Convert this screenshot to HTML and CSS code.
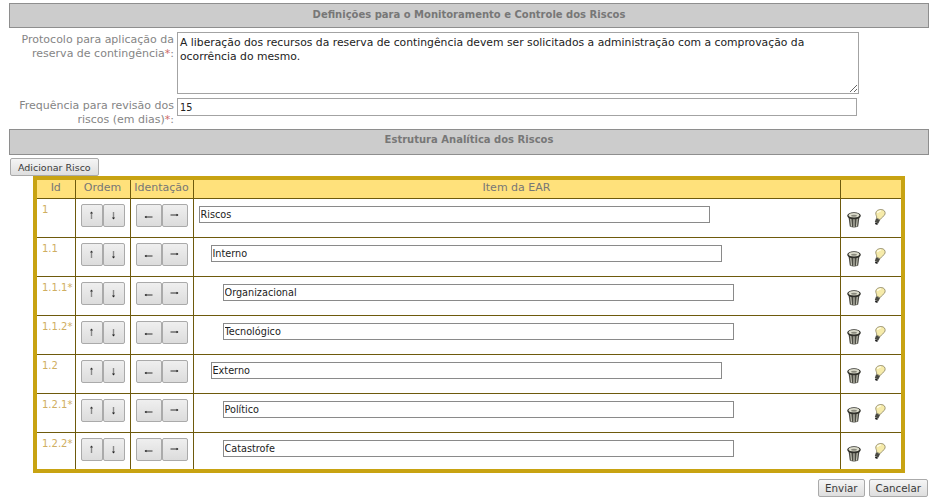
FILE: index.html
```html
<!DOCTYPE html>
<html lang="pt-BR">
<head>
  <meta charset="UTF-8">
  <title>Monitoramento e Controle dos Riscos</title>
  <link rel="stylesheet" href="styles.css">
</head>
<body>

  <svg class="sprites" width="0" height="0">
    <symbol id="lixo" viewBox="0 0 14 16">
      <path d="M1.500 5 L2.800 14.500 Q7 16.500 11.200 14.500 L12.500 5 Z" fill="#4a4a42"/>
      <path d="M3.700 6.500 L4.500 14.500 M7 7 V15 M10.300 6.500 L9.500 14.500" stroke="#c4c4b6" stroke-width="1.200" fill="none"/>
      <ellipse cx="7" cy="3.800" rx="6.800" ry="3.500" fill="#2f2f29"/>
      <ellipse cx="7" cy="3.200" rx="5.300" ry="2.200" fill="#dcdccc"/>
      <ellipse cx="7" cy="3.800" rx="3" ry="1" fill="#8b8b7e"/>
    </symbol>
    <symbol id="lampada" viewBox="0 0 12 15">
      <path d="M7.500 .5 C10.300 .5 11.700 2.600 11.200 4.700 C10.700 6.800 8 7.500 6.600 10 L3.300 8.600 C3.800 6.800 2.300 5.800 2.500 3.800 C2.700 1.800 4.700 .5 7.500 .5 Z" fill="#f6ebaa" stroke="#8f8a68" stroke-width=".8"/>
      <path d="M4 3.800 C4.500 2.500 6 1.700 7.500 1.800" stroke="#fffde8" stroke-width="1.300" fill="none"/>
      <path d="M2.800 8.700 L6.500 10.300 L4.900 13.600 L1.600 12.100 Z" fill="#4a4a43"/>
      <path d="M2 13.300 L4.200 14.300" stroke="#1c1c1c" stroke-width="1.500"/>
    </symbol>
    <symbol id="cima" viewBox="0 0 9 11">
      <path d="M4.500 2 V9" stroke="#8a8a8a" stroke-width="1.400"/>
      <path d="M3 3.500 L4.500 1.500 L6 3.500 Z" fill="#333"/>
    </symbol>
    <symbol id="baixo" viewBox="0 0 9 11">
      <path d="M4.500 2 V9" stroke="#8a8a8a" stroke-width="1.400"/>
      <path d="M3 7.500 L4.500 9.500 L6 7.500 Z" fill="#222"/>
    </symbol>
    <symbol id="esquerda" viewBox="0 0 11 9">
      <path d="M2 6 H9.500" stroke="#333" stroke-width="1"/>
      <path d="M3.500 4.700 L1.500 6 L3.500 7.300 Z" fill="#222"/>
    </symbol>
    <symbol id="direita" viewBox="0 0 11 9">
      <path d="M1.500 4 H9" stroke="#333" stroke-width="1"/>
      <path d="M7.500 2.700 L9.500 4 L7.500 5.300 Z" fill="#222"/>
    </symbol>
  </svg>

  <h2 class="barra">Definições para o Monitoramento e Controle dos Riscos</h2>

  <div class="campo">
    <label class="rotulo">Protocolo para aplicação da reserva de contingência<span class="obrigatorio">*</span>:</label>
    <textarea class="texto-longo">A liberação dos recursos da reserva de contingência devem ser solicitados a administração com a comprovação da ocorrência do mesmo.</textarea>
  </div>

  <div class="campo">
    <label class="rotulo">Frequência para revisão dos riscos (em dias)<span class="obrigatorio">*</span>:</label>
    <input class="texto-curto" type="text" value="15">
  </div>

  <h2 class="barra barra-ear">Estrutura Analítica dos Riscos</h2>

  <button class="botao adicionar">Adicionar Risco</button>

  <table class="ear">
    <thead>
      <tr>
        <th class="col-id">Id</th>
        <th class="col-ordem">Ordem</th>
        <th class="col-ident">Identação</th>
        <th class="col-item">Item da EAR</th>
        <th></th>
      </tr>
    </thead>
    <tbody id="linhas"></tbody>
  </table>

  <div class="rodape">
    <button class="botao">Enviar</button>
    <button class="botao">Cancelar</button>
  </div>

  <script>
    const itens = [
      ["1", 0, "Riscos"],
      ["1.1", 1, "Interno"],
      ["1.1.1*", 2, "Organizacional"],
      ["1.1.2*", 2, "Tecnológico"],
      ["1.2", 1, "Externo"],
      ["1.2.1*", 2, "Político"],
      ["1.2.2*", 2, "Catastrofe"]
    ];

    const linhas = document.getElementById("linhas");
    for (const [id, nivel, nome] of itens) {
      const tr = document.createElement("tr");
      tr.innerHTML = `
        <td class="id">${id}</td>
        <td><div class="par">
          <button class="seta"><svg class="vertical"><use href="#cima"/></svg></button>
          <button class="seta"><svg class="vertical"><use href="#baixo"/></svg></button>
        </div></td>
        <td><div class="par">
          <button class="seta larga"><svg class="horizontal"><use href="#esquerda"/></svg></button>
          <button class="seta larga"><svg class="horizontal"><use href="#direita"/></svg></button>
        </div></td>
        <td><input class="item nivel-${nivel}" type="text" value="${nome}"></td>
        <td><div class="acoes">
          <svg class="lixo"><use href="#lixo"/></svg>
          <svg class="lampada"><use href="#lampada"/></svg>
        </div></td>`;
      linhas.appendChild(tr);
    }
  </script>

</body>
</html>
```

FILE: styles.css
```css
body {
  margin: 3px 6px 0 9px;
  font-family: "DejaVu Sans", Verdana, sans-serif;
  font-size: 11px;
  color: #222;
  background: #fff;
}
.sprites {
  position: absolute;
}
.barra {
  margin: 0;
  height: 23px;
  line-height: 21px;
  border: 1px solid #8e8e8e;
  background: #cccccc;
  color: #777;
  font-size: 10px;
  font-weight: bold;
  text-align: center;
}
.barra-ear {
  margin-top: 2px;
  height: 24px;
  line-height: 20px;
}
.campo {
  display: flex;
  align-items: flex-start;
  margin-top: 4px;
}
.rotulo {
  width: 165px;
  padding: 1px 3px 0 0;
  text-align: right;
  color: #858585;
  font-size: 11px;
  line-height: 14px;
}
.obrigatorio {
  color: #cc6a66;
}
.texto-longo, .texto-curto, .item {
  box-sizing: border-box;
  font-family: "DejaVu Sans", Verdana, sans-serif;
  color: #222;
  border: 1px solid #a3a3a3;
  margin: 0;
}
.texto-longo {
  width: 682px;
  height: 62px;
  padding: 3px 2px 0;
  font-size: 10.800px;
  line-height: 14px;
}
.texto-curto {
  width: 680px;
  height: 18px;
  padding: 1px 2px;
  font-size: 9.700px;
}
.botao {
  box-sizing: border-box;
  font-family: "DejaVu Sans", Verdana, sans-serif;
  font-size: 10.300px;
  height: 18px;
  padding: 0 6px;
  color: #3a3a3a;
  border: 1px solid #aaa;
  border-radius: 2px;
  background: linear-gradient(#f5f5f5, #dedede);
}
.adicionar {
  display: block;
  margin: 3px 0 0 1px;
  padding: 0 7px;
  font-size: 9.500px;
}
.ear {
  box-sizing: border-box;
  width: 872px;
  margin: 0 0 0 24px;
  border: 4px solid #c8a312;
  border-collapse: collapse;
  table-layout: fixed;
}
.ear th {
  box-sizing: border-box;
  height: 20px;
  padding: 0 0 2px;
  background: #ffe17b;
  color: #777;
  font-weight: normal;
  font-size: 11px;
  border: 1px solid #6e5a0c;
}
.ear td {
  box-sizing: border-box;
  height: 39px;
  padding: 0;
  border: 1px solid #6e5a0c;
  vertical-align: top;
}
.col-id {
  width: 40px;
}
.col-ordem {
  width: 55px;
}
.col-ident {
  width: 63px;
}
.col-item {
  width: 647px;
}
.ear td.id {
  padding: 5px 0 0 5px;
  color: #cfae62;
  font-size: 10px;
}
.par {
  display: flex;
  justify-content: center;
  gap: 0;
  padding-top: 5px;
}
.seta {
  display: flex;
  align-items: center;
  justify-content: center;
  width: 22px;
  height: 23px;
  padding: 0;
  border: 1px solid #aaa;
  border-radius: 2px;
  background: linear-gradient(#efefef, #dcdcdc);
}
.seta.larga {
  width: 26px;
}
.vertical {
  width: 9px;
  height: 11px;
}
.horizontal {
  width: 11px;
  height: 9px;
}
.item {
  display: block;
  width: 511px;
  height: 17px;
  margin-top: 7px;
  padding: 0 1px;
  font-size: 9.700px;
  border-color: #8a8a8a;
}
.nivel-0 {
  margin-left: 5px;
}
.nivel-1 {
  margin-left: 17px;
}
.nivel-2 {
  margin-left: 29px;
}
.acoes {
  display: flex;
  align-items: flex-start;
  gap: 12px;
  padding: 10px 0 0 6px;
}
.lixo {
  width: 14px;
  height: 16px;
  margin-top: 3px;
}
.lampada {
  width: 13px;
  height: 16px;
}
.rodape {
  display: flex;
  justify-content: flex-end;
  gap: 4px;
  margin: 6px 1px 0 0;
}
```
